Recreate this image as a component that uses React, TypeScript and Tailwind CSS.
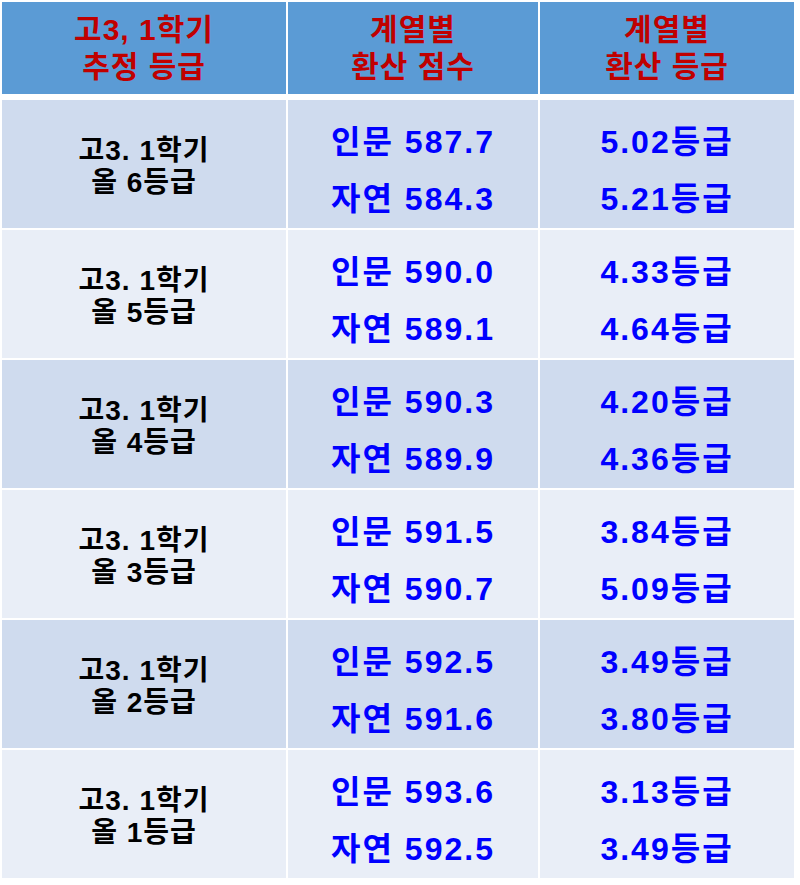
const rows = [
  { grade: "6", score: ["587.7", "584.3"], level: ["5.02", "5.21"] },
  { grade: "5", score: ["590.0", "589.1"], level: ["4.33", "4.64"] },
  { grade: "4", score: ["590.3", "589.9"], level: ["4.20", "4.36"] },
  { grade: "3", score: ["591.5", "590.7"], level: ["3.84", "5.09"] },
  { grade: "2", score: ["592.5", "591.6"], level: ["3.49", "3.80"] },
  { grade: "1", score: ["593.6", "592.5"], level: ["3.13", "3.49"] },
];

const font = "font-['Liberation_Sans','Noto_Sans_CJK_KR',sans-serif] font-bold";

const App = () => {
  return (
    <div className={`w-[800px] h-[885px] bg-white pt-[2px] pl-[2px] ${font}`}>
      <div className="grid grid-cols-[284px_250px_254px] gap-x-[2px] w-[792px]">
        <div className="h-[92px] bg-[#5b9bd5] flex flex-col items-center justify-center text-[#c00000] text-[30px] leading-[37px] tracking-[1px]">
          <span>고3, 1학기</span>
          <span>추정 등급</span>
        </div>
        <div className="h-[92px] bg-[#5b9bd5] flex flex-col items-center justify-center text-[#c00000] text-[30px] leading-[37px] tracking-[1px]">
          <span>계열별</span>
          <span>환산 점수</span>
        </div>
        <div className="h-[92px] bg-[#5b9bd5] flex flex-col items-center justify-center text-[#c00000] text-[30px] leading-[37px] tracking-[1px]">
          <span>계열별</span>
          <span>환산 등급</span>
        </div>
      </div>
      <div className="flex flex-col gap-y-[2px] mt-[6px] w-[792px]">
        {rows.map((r, i) => {
          const bg = i % 2 === 0 ? "bg-[#cfdbee]" : "bg-[#e9eef7]";
          return (
            <div key={r.grade} className="grid grid-cols-[284px_250px_254px] gap-x-[2px] h-[128px]">
              <div className={`${bg} flex flex-col items-center justify-center pt-[5px] text-black text-[28px] leading-[32px] tracking-[1px]`}>
                <span>고3. 1학기</span>
                <span>올 {r.grade}등급</span>
              </div>
              <div className={`${bg} flex flex-col items-center justify-center pt-[13px] text-[#0000ff] text-[32px] leading-[57px] tracking-[2px]`}>
                <span>인문 {r.score[0]}</span>
                <span>자연 {r.score[1]}</span>
              </div>
              <div className={`${bg} flex flex-col items-center justify-center pt-[13px] text-[#0000ff] text-[32px] leading-[57px] tracking-[2px]`}>
                <span>{r.level[0]}등급</span>
                <span>{r.level[1]}등급</span>
              </div>
            </div>
          );
        })}
      </div>
    </div>
  );
};

export default App;
